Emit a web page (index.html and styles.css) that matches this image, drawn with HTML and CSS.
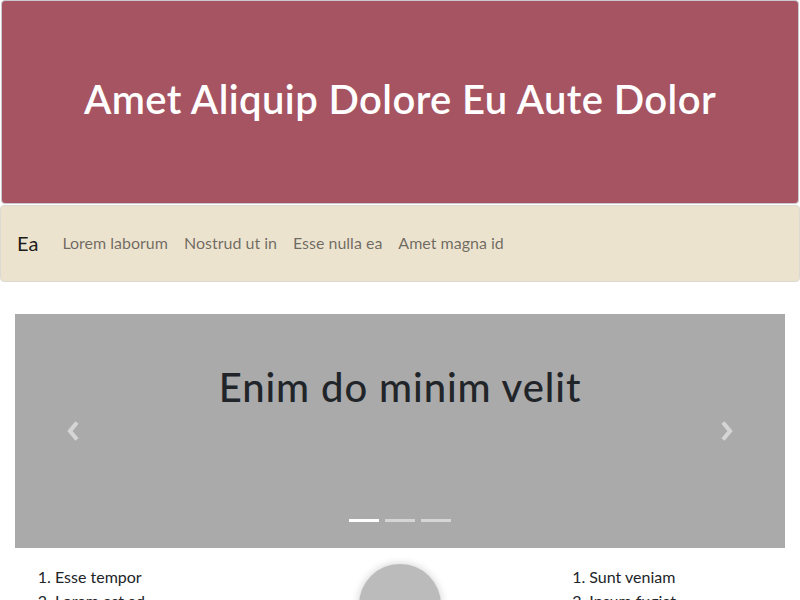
FILE: index.html
```html
<!DOCTYPE html>
<html lang="en">
<head>
<meta charset="utf-8">
<title>Amet Aliquip</title>
<link rel="stylesheet" href="styles.css">
</head>
<body>
<header class="hero">
  <h1 class="hero-title">Amet Aliquip Dolore Eu Aute Dolor</h1>
</header>
<nav class="navbar">
  <a class="brand" href="#">Ea</a>
  <ul class="nav-links">
    <li><a href="#">Lorem laborum</a></li>
    <li><a href="#">Nostrud ut in</a></li>
    <li><a href="#">Esse nulla ea</a></li>
    <li><a href="#">Amet magna id</a></li>
  </ul>
</nav>
<main class="container">
  <section class="carousel">
    <h2 class="carousel-title">Enim do minim velit</h2>
    <a class="control control-prev" href="#" aria-label="Previous">
      <svg width="16" height="24" viewBox="0 0 16 24"><path d="M12 3.5 L5 12 L12 20.5" fill="none" stroke="currentColor" stroke-width="4.2"/></svg>
    </a>
    <a class="control control-next" href="#" aria-label="Next">
      <svg width="16" height="24" viewBox="0 0 16 24"><path d="M4 3.5 L11 12 L4 20.5" fill="none" stroke="currentColor" stroke-width="4.2"/></svg>
    </a>
    <ol class="indicators">
      <li class="active"></li>
      <li></li>
      <li></li>
    </ol>
  </section>
  <section class="features">
    <ol class="list list-left">
      <li>Esse tempor</li>
      <li>Lorem est ad</li>
    </ol>
    <div class="avatar-col"><div class="avatar"></div></div>
    <ol class="list list-right">
      <li>Sunt veniam</li>
      <li>Ipsum fugiat</li>
    </ol>
  </section>
</main>
</body>
</html>
```
FILE: styles.css
```css
* { box-sizing: border-box; }
html, body { margin: 0; padding: 0; }
body {
  font-family: "Lato", "Noto Sans", sans-serif;
  font-size: 16px;
  line-height: 1.5;
  color: #212529;
  background: #fff;
}
a { text-decoration: none; }

.hero {
  height: 204px;
  margin: 0 1px;
  padding-bottom: 6px;
  background: #a65461;
  border: 1px solid #c9c9cf;
  border-radius: 4px;
  display: flex;
  align-items: center;
  justify-content: center;
}
.hero-title {
  margin: 0;
  color: #fff;
  font-size: 40px;
  font-weight: 600;
  line-height: 1.2;
  letter-spacing: 0.4px;
}

.navbar {
  margin: 1px 0 0;
  height: 77px;
  padding: 0 16px 2px;
  background: #ece3cf;
  border: 1px solid #dcdad3;
  border-radius: 4px;
  display: flex;
  align-items: center;
}
.brand {
  color: rgba(0, 0, 0, 0.9);
  font-size: 20px;
  margin-right: 16px;
}
.nav-links {
  list-style: none;
  margin: 0;
  padding: 0;
  display: flex;
}
.nav-links a {
  display: block;
  padding: 8px;
  color: rgba(0, 0, 0, 0.55);
  font-size: 16px;
}

.container {
  padding: 0 15px;
  margin-top: 32px;
}
.carousel {
  position: relative;
  height: 234px;
  background: #aaaaaa;
  padding-top: 49px;
}
.carousel-title {
  margin: 0;
  text-align: center;
  font-size: 40px;
  font-weight: 500;
  line-height: 1.2;
  color: #212529;
  letter-spacing: 0.9px;
}
.control {
  position: absolute;
  top: 0;
  bottom: 0;
  width: 15%;
  display: flex;
  align-items: center;
  justify-content: center;
  color: rgba(255, 255, 255, 0.5);
}
.control-prev { left: 0; }
.control-next { right: 0; }
.indicators {
  position: absolute;
  left: 0;
  right: 0;
  bottom: 26px;
  margin: 0;
  padding: 0;
  list-style: none;
  display: flex;
  justify-content: center;
  gap: 6px;
}
.indicators li {
  width: 30px;
  height: 3px;
  background: rgba(255, 255, 255, 0.5);
}
.indicators li.active { background: #fff; }

.features {
  display: grid;
  grid-template-columns: 1fr 1fr 1fr;
}
.list {
  margin: 17px 0 0;
  padding-left: 40px;
}
.list-right { padding-left: 61px; }
.avatar-col {
  display: flex;
  justify-content: center;
  padding-top: 16px;
}
.avatar {
  width: 82px;
  height: 82px;
  border-radius: 50%;
  background: #bbbbbb;
  box-shadow: 0 0 8px rgba(0, 0, 0, 0.2);
}
```
